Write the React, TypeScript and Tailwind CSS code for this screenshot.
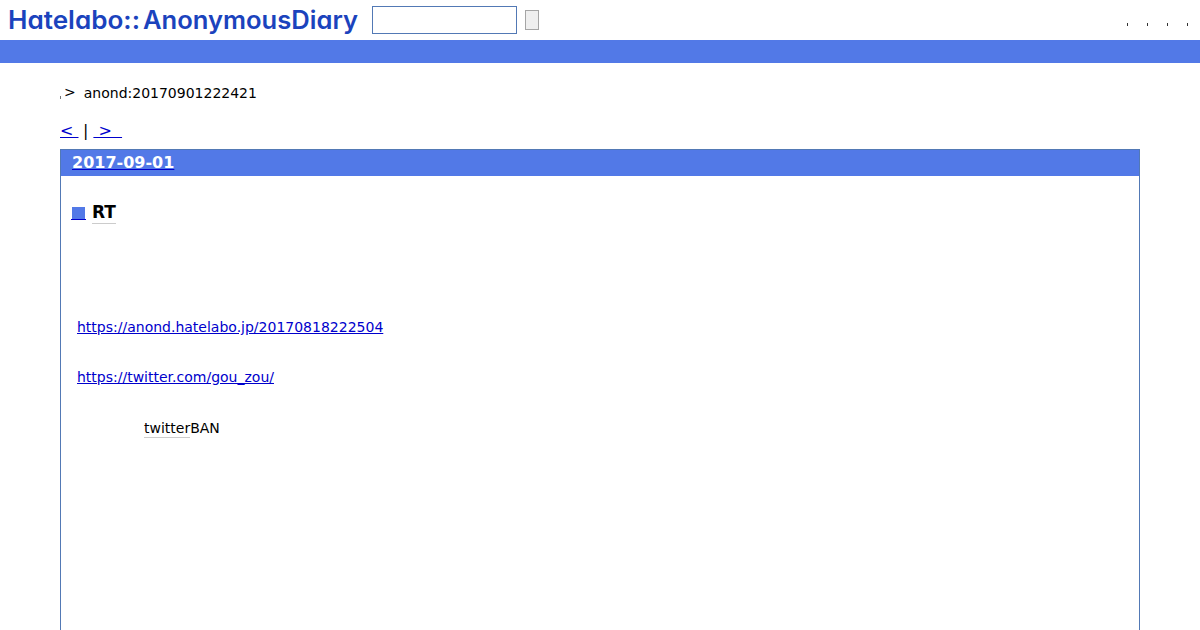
const menuItems = ['first', 'second', 'third', 'fourth']

function Logo() {
  return (
    <svg width="360" height="40" viewBox="0 0 360 40" className="overflow-visible" role="img" aria-label="Hatelabo::AnonymousDiary">
      <g
        fill="#1b43bd"
        className="font-['Inter',sans-serif] text-[25px] font-semibold [font-feature-settings:'cv11']"
      >
        <text x="8" y="29" textLength="132" lengthAdjust="spacingAndGlyphs">Hatelabo::</text>
        <text x="143" y="29" textLength="215" lengthAdjust="spacingAndGlyphs">AnonymousDiary</text>
      </g>
    </svg>
  )
}

function Header() {
  return (
    <header>
      <div className="flex h-10 items-center">
        <Logo />
        <input type="text" className="ml-3 h-7 w-[145px] border border-[#5279b5] bg-white px-1 outline-none" />
        <button type="button" aria-label="Search" className="ml-2 h-5 w-3.5 border border-[#a5a5a5] bg-[#efefef]" />
        <ul className="mt-[9px] mr-3 ml-auto flex gap-[19px]">
          {menuItems.map((item) => (
            <li key={item} className="h-[3px] w-px bg-[#333333]" />
          ))}
        </ul>
      </div>
      <div className="h-[23px] bg-[#5279e7]" />
    </header>
  )
}

function Breadcrumb() {
  return (
    <div className="flex h-5 items-center text-sm leading-5">
      <span className="mt-2 h-[3px] w-px bg-[#777777]" />
      <span className="-mt-0.5 ml-[3px]">&gt;</span>
      <span className="ml-2">anond:20170901222421</span>
    </div>
  )
}

function Pager() {
  return (
    <div className="mt-[18px] flex h-5 items-center text-base leading-5 whitespace-pre">
      <a href="#" className="w-[18px] text-[#0000cc] underline">{'<\u00a0'}</a>
      <span className="ml-[5px]">|</span>
      <a href="#" className="ml-[5px] text-[#0000cc] underline">{'\u00a0>\u00a0\u00a0'}</a>
    </div>
  )
}

function Entry() {
  return (
    <article className="mt-2 h-[481px] border border-b-0 border-[#5279b5]">
      <h2 className="h-[26px] bg-[#5279e7] pl-[11px] text-base leading-[25px] font-bold text-white">
        <a href="#" className="underline decoration-[#0000cc]">2017-09-01</a>
      </h2>
      <h3 className="mt-[23px] flex h-6 items-start pl-2.5">
        <a href="#" aria-label="Permalink" className="mt-2 flex h-[13px] w-[15px] justify-center border-b border-[#0000cc]">
          <span className="h-3 w-[13px] bg-[#5279e7]" />
        </a>
        <span className="ml-1.5 h-[25px] border-b border-[#cccccc] text-[17px] leading-[26px] font-bold">RT</span>
      </h3>
      <div className="pl-4 text-sm leading-5">
        <p className="mt-[94px]">
          <a href="#" className="text-[#0000cc] underline">https://anond.hatelabo.jp/20170818222504</a>
        </p>
        <p className="mt-[30px]">
          <a href="#" className="text-[#0000cc] underline">https://twitter.com/gou_zou/</a>
        </p>
        <p className="mt-[31px] flex pl-[67px]">
          <span className="h-5 border-b border-[#cccccc]">twitter</span>BAN
        </p>
      </div>
    </article>
  )
}

export default function App() {
  return (
    <div className="h-[630px] overflow-hidden bg-white font-['DejaVu_Sans',sans-serif] text-black">
      <Header />
      <main className="mx-[60px] pt-5">
        <Breadcrumb />
        <Pager />
        <Entry />
      </main>
    </div>
  )
}
